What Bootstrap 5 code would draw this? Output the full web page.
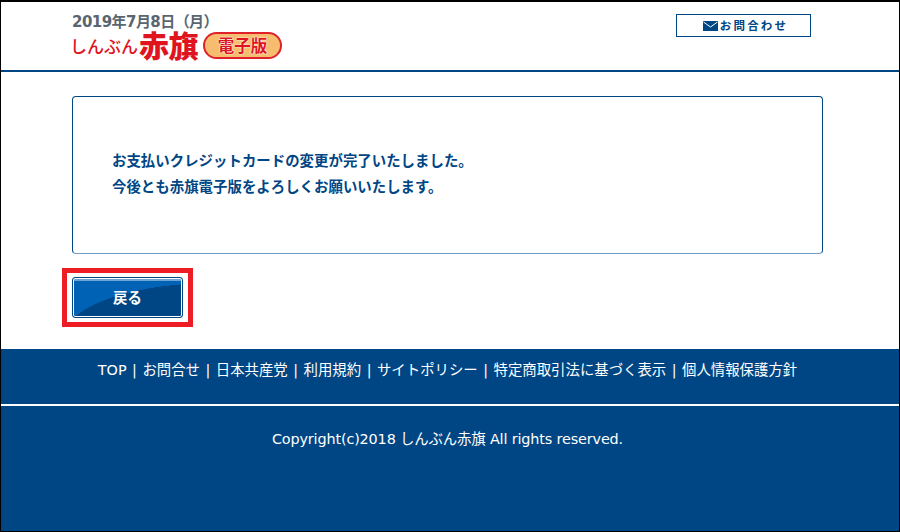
<!DOCTYPE html>
<html lang="ja">
<head>
<meta charset="utf-8">
<title>しんぶん赤旗 電子版</title>
<link href="https://cdn.jsdelivr.net/npm/bootstrap@5.3.0/dist/css/bootstrap.min.css" rel="stylesheet">
<style>
html,body{height:100%;}
body{font-family:"DejaVu Sans","Noto Sans CJK JP",sans-serif;background:#fff;color:#004684;}
.frame{width:900px;height:532px;border:1px solid #000;border-top-width:2px;}
.site-head{height:70px;flex:none;border-bottom:2px solid #004684;padding:12px 88px 0 71px;}
.head-date{font:bold 15px/16px "DejaVu Sans","Noto Sans CJK JP",sans-serif;letter-spacing:-.55px;color:#59656f;}
.logo-row{color:#e0141e;font-family:"Noto Sans CJK JP",sans-serif;font-weight:700;margin-top:2px;margin-left:-2px;height:27px;}
.logo-kana{font-size:17px;line-height:27px;font-weight:500;}
.logo-main{font-size:30px;line-height:27px;font-weight:900;letter-spacing:-.5px;margin-left:1px;margin-top:-3px;}
.logo-pill{width:79px;height:27px;margin-left:5px;border:2px solid #e0202a;border-radius:14px;background:#f6bd6f;font-size:16.500px;line-height:22px;font-weight:700;text-align:center;text-shadow:0 0 2px #fff,0 0 1px #fff;}
.contact-btn{width:135px;height:23px;border:1px solid #004684;padding-left:4px;font:bold 11.500px/21px "Noto Sans CJK JP",sans-serif;letter-spacing:2.200px;color:#004684;text-decoration:none;}
.mail-icon{margin-right:-2px;}
.main-area{flex:1;padding:24px 76px 0 71px;}
.msg-box{height:158px;border:1px solid #004684;border-bottom-color:#6f9bc0;border-radius:4px;padding:50px 39px 0;font:bold 14.400px/26px "Noto Sans CJK JP",sans-serif;letter-spacing:.04px;color:#004684;}
.back-wrap{width:131px;height:59px;border:5px solid #ee1c25;margin:14px 0 0 -10px;padding:4px;}
.back-btn{display:block;width:111px;height:41px;margin:0 0 0 1px;border:1px solid #004684;border-radius:3px;box-shadow:inset 0 0 0 1px #fff;background:linear-gradient(#6fa5d5 0 3px,transparent 3px),radial-gradient(ellipse 150px 55px at 140px 60px,#004684 99.500%,#0062b4 100%);color:#fff;font:bold 14.400px/33px "Noto Sans CJK JP",sans-serif;padding:0 0 2px;}
.back-btn:hover{color:#fff;border-color:#004684;}
.site-foot{height:182px;flex:none;background:#004684;color:#fff;font-size:14.400px;padding-right:5px;}
.foot-links{height:55px;padding-top:11px;line-height:20px;word-spacing:.9px;}
.foot-links a{color:#fff;text-decoration:none;}
.foot-rule{height:2px;background:#fff;margin-right:-5px;}
.foot-copy{padding-top:23px;line-height:20px;letter-spacing:-.15px;}
</style>
</head>
<body class="m-0">
<div class="frame d-flex flex-column">
  <header class="site-head d-flex justify-content-between align-items-start">
    <div>
      <div class="head-date">2019年7月8日（月）</div>
      <div class="logo-row d-flex align-items-center">
        <span class="logo-kana">しんぶん</span><span class="logo-main">赤旗</span><span class="logo-pill">電子版</span>
      </div>
    </div>
    <a href="#" class="contact-btn d-flex align-items-center justify-content-center gap-1">
      <svg class="mail-icon" width="15" height="10" viewBox="0 0 15 10"><rect width="15" height="10" fill="#004684"/><path d="M0.5 1 7.5 6 14.500 1" fill="none" stroke="#fff" stroke-width="1"/></svg>
      <span>お問合わせ</span>
    </a>
  </header>
  <main class="main-area">
    <div class="msg-box">
      <div>お支払いクレジットカードの変更が完了いたしました。</div>
      <div>今後とも赤旗電子版をよろしくお願いいたします。</div>
    </div>
    <div class="back-wrap"><button type="button" class="btn back-btn">戻る</button></div>
  </main>
  <footer class="site-foot text-center">
    <div class="foot-links"><a href="#">TOP</a> | <a href="#">お問合せ</a> | <a href="#">日本共産党</a> | <a href="#">利用規約</a> | <a href="#">サイトポリシー</a> | <a href="#">特定商取引法に基づく表示</a> | <a href="#">個人情報保護方針</a></div>
    <div class="foot-rule"></div>
    <div class="foot-copy">Copyright(c)2018 しんぶん赤旗 All rights reserved.</div>
  </footer>
</div>
</body>
</html>
